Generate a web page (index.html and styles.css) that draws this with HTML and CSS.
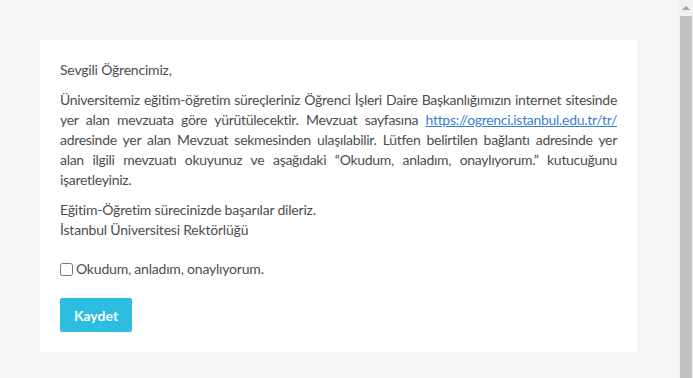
FILE: index.html
```html
<!DOCTYPE html>
<html lang="tr">
<head>
    <meta charset="UTF-8">
    <meta name="viewport" content="width=device-width, initial-scale=1.0">
    <title>Mevzuat Onayı</title>
    <link rel="stylesheet" href="styles.css">
</head>
<body>
    <div class="page">
        <div class="main">
            <div class="card">
                <p>Sevgili Öğrencimiz,</p>
                <p class="justify">
                    <span class="line">Üniversitemiz eğitim-öğretim süreçleriniz Öğrenci İşleri Daire Başkanlığımızın internet sitesinde</span>
                    <span class="line">yer alan mevzuata göre yürütülecektir. Mevzuat sayfasına <a href="https://ogrenci.istanbul.edu.tr/tr/">https://ogrenci.istanbul.edu.tr/tr/</a></span>
                    <span class="line">adresinde yer alan Mevzuat sekmesinden ulaşılabilir. Lütfen belirtilen bağlantı adresinde yer</span>
                    <span class="line">alan ilgili mevzuatı okuyunuz ve aşağıdaki “Okudum, anladım, onaylıyorum.” kutucuğunu</span>
                    işaretleyiniz.
                </p>
                <p>Eğitim-Öğretim sürecinizde başarılar dileriz.<br>İstanbul Üniversitesi Rektörlüğü</p>
                <label class="agree"><input type="checkbox" id="agree">Okudum, anladım, onaylıyorum.</label>
                <button class="save-btn">Kaydet</button>
            </div>
        </div>
        <div class="scrollbar">
            <div class="arrow"></div>
            <div class="thumb"></div>
        </div>
    </div>
</body>
</html>
```
FILE: styles.css
```css
body {
    font-family: 'Lato', sans-serif;
    font-size: 14px;
    letter-spacing: -0.2px;
    color: #4d4d4d;
    background-color: #f5f6f8;
    margin: 0;
}
.page {
    display: flex;
    height: 378px;
    overflow: hidden;
}
.main {
    flex: 1;
    padding: 40px 41px 0 40px;
}
.card {
    background-color: white;
    padding: 20px;
}
.card p {
    margin: 0 0 10px 0;
    line-height: 20px;
}
.justify {
    text-align: justify;
    letter-spacing: -0.3px;
}
.line {
    display: block;
    white-space: nowrap;
    text-align-last: justify;
}
.card a {
    color: #3a7fd5;
}
.agree {
    display: flex;
    align-items: center;
    margin-top: 19px;
    line-height: 20px;
}
.agree input {
    width: 13px;
    height: 13px;
    margin: 0 3px 0 0;
}
.save-btn {
    margin-top: 19px;
    width: 72px;
    height: 34px;
    border: none;
    border-radius: 2px;
    background-color: #2dbde0;
    color: white;
    font-family: 'Lato', sans-serif;
    font-weight: bold;
    font-size: 14px;
    letter-spacing: 0;
    display: block;
}
.scrollbar {
    width: 15px;
    background-color: #f1f1f1;
    display: flex;
    flex-direction: column;
    align-items: center;
    padding: 0 1px 0 2px;
    flex-shrink: 0;
    box-sizing: border-box;
}
.arrow {
    width: 0;
    height: 0;
    margin: 6px 0 6px;
    border-left: 4px solid transparent;
    border-right: 4px solid transparent;
    border-bottom: 4px solid #a3a3a3;
}
.thumb {
    width: 100%;
    flex: 1;
    background-color: #c1c1c1;
}
```
